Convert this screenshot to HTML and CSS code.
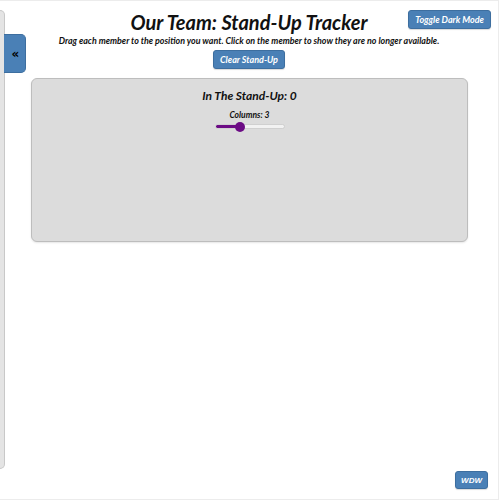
FILE: index.html
```html
<!DOCTYPE html>
<html>
<head>
<meta charset="utf-8">
<link rel="stylesheet" href="styles.css">
</head>
<body>
<div class="frame">
  <aside class="drawer">
    <button class="drawer-tab">&laquo;</button>
  </aside>
  <header class="header">
    <h1 class="title">Our Team: Stand-Up Tracker</h1>
    <button class="btn btn-dark">Toggle Dark Mode</button>
  </header>
  <p class="subtitle">Drag each member to the position you want. Click on the member to show they are no longer available.</p>
  <div class="actions"><button class="btn">Clear Stand-Up</button></div>
  <section class="panel">
    <h2 class="panel-title">In The Stand-Up: 0</h2>
    <label class="cols-label">Columns: 3</label>
    <input class="cols-range" type="range" min="1" max="7" value="3" style="--fill: 36%">
  </section>
  <button class="btn btn-wdw">WDW</button>
</div>
</body>
</html>
```
FILE: styles.css
```css
html, body {
  margin: 0;
  padding: 0;
  background: #fff;
}
body {
  font-family: Lato, "Open Sans", sans-serif;
  font-style: italic;
  font-weight: 700;
  color: #111;
}
.frame {
  width: 498px;
  height: 498px;
  border: 1px solid #ececec;
  border-left: none;
  position: relative;
  overflow: hidden;
}
.drawer {
  position: absolute;
  left: 0;
  top: 9px;
  width: 4px;
  height: 457px;
  background: #e4e4e4;
  border: 1px solid #c8c8c8;
  border-left: none;
  border-radius: 0 5px 5px 0;
}
.drawer-tab {
  position: absolute;
  left: 4px;
  top: 23px;
  width: 22px;
  height: 39px;
  background: #4a80b6;
  border: 1px solid #3d6e9f;
  border-left: none;
  border-radius: 0 5px 5px 0;
  color: #000;
  font-family: "DejaVu Sans", sans-serif;
  font-style: normal;
  font-weight: 700;
  font-size: 12px;
  padding: 0 0 0 2px;
  line-height: 1;
}
.header {
  display: flex;
  justify-content: center;
  position: relative;
  padding-top: 9px;
}
.title {
  margin: 0;
  font-size: 20px;
  line-height: 24px;
  font-weight: 700;
  font-style: italic;
}
.btn {
  background: #4a80b6;
  color: #fff;
  border: 1px solid #3d6e9f;
  border-radius: 3px;
  font-family: Lato, "Open Sans", sans-serif;
  font-style: italic;
  font-weight: 700;
  font-size: 9px;
  padding: 0 6px;
  height: 19px;
  line-height: 17px;
  box-shadow: 0 1px 1px rgba(0,0,0,0.15);
}
.btn-dark {
  position: absolute;
  right: 7px;
  top: 9px;
  padding: 0 6px;
}
.subtitle {
  margin: 1px 0 0;
  text-align: center;
  font-size: 8.9px;
  line-height: 12px;
}
.actions {
  display: flex;
  justify-content: center;
  margin-top: 3px;
}
.panel {
  margin: 9px 30px 0 31px;
  height: 162px;
  background: #dcdcdc;
  border: 1px solid #bdbdbd;
  border-radius: 6px;
  box-shadow: 0 1px 2px rgba(0,0,0,0.1);
  display: flex;
  flex-direction: column;
  align-items: center;
}
.panel-title {
  margin: 10px 0 0;
  font-size: 12px;
  line-height: 14px;
  font-weight: 700;
}
.cols-label {
  margin-top: 7px;
  font-size: 8.5px;
  line-height: 10px;
  font-weight: 700;
}
.cols-range {
  -webkit-appearance: none;
  appearance: none;
  margin: 4px 0 0;
  width: 70px;
  height: 5px;
  border-radius: 3px;
  border: 1px solid #d0d0d0;
  box-sizing: border-box;
  background: linear-gradient(to right, #6c0c85 0, #6c0c85 var(--fill), #f2f2f2 var(--fill), #f2f2f2 100%);
  outline: none;
}
.cols-range::-webkit-slider-thumb {
  -webkit-appearance: none;
  appearance: none;
  width: 10px;
  height: 10px;
  border-radius: 50%;
  background: #6c0c85;
  border: none;
}
.btn-wdw {
  position: absolute;
  right: 10px;
  bottom: 10px;
  height: 18px;
  padding: 0 5px;
  font-family: "Liberation Sans", Arial, sans-serif;
  font-size: 8px;
}
```
